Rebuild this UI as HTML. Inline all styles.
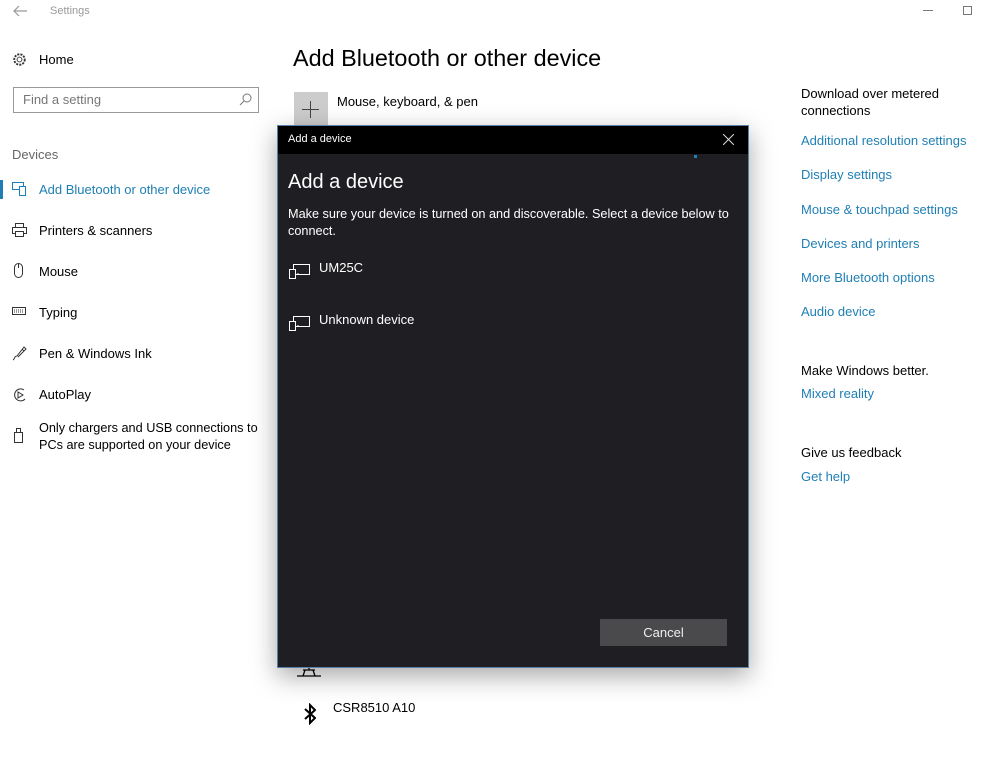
<!DOCTYPE html>
<html><head><meta charset="utf-8"><style>
*{margin:0;padding:0;box-sizing:border-box}
body{width:1000px;height:783px;background:#fff;font-family:"Liberation Sans",sans-serif;position:relative;overflow:hidden;color:#000}
.a{position:absolute;white-space:nowrap}
.lk{color:#1f7fb5;font-size:13px}
.nav{font-size:13px;left:39px}
svg{position:absolute}
</style></head><body>
<svg style="left:12px;top:5px" width="16" height="12" viewBox="0 0 16 12"><path d="M15 6H2M7 1L2 6l5 5" stroke="#999" fill="none" stroke-width="1.2"/></svg>
<div class="a" style="left:50px;top:5px;font-size:11px;color:#999">Settings</div>
<div class="a" style="left:923px;top:10px;width:10px;border-top:1px solid #777"></div>
<div class="a" style="left:963px;top:6px;width:9px;height:9px;border:1px solid #777"></div>

<svg style="left:12px;top:52px" width="15" height="15" viewBox="0 0 16 16"><circle cx="8" cy="8" r="2.6" fill="none" stroke="#333"/><circle cx="8" cy="8" r="5.6" fill="none" stroke="#333" stroke-dasharray="2.2 1.2" stroke-width="2"/></svg>
<div class="a" style="left:39px;top:52px;font-size:13px">Home</div>
<div class="a" style="left:13px;top:87px;width:246px;height:26px;border:1px solid #999"></div>
<div class="a" style="left:23px;top:92px;font-size:13px;color:#777">Find a setting</div>
<svg style="left:239px;top:92px" width="14" height="14" viewBox="0 0 14 14"><circle cx="8" cy="6" r="4" fill="none" stroke="#777"/><path d="M5 9L1 13" stroke="#777"/></svg>
<div class="a" style="left:12px;top:147px;font-size:13px;color:#666">Devices</div>
<div class="a" style="left:0;top:180px;width:3px;height:19px;background:#1f7fb5"></div>
<svg style="left:12px;top:182px" width="16" height="14" viewBox="0 0 16 14"><rect x="0.5" y="0.5" width="11" height="7" fill="none" stroke="#1f7fb5"/><rect x="7.5" y="4.5" width="6" height="9" fill="#fff" stroke="#1f7fb5"/></svg>
<div class="a nav" style="top:182px;color:#1f7fb5">Add Bluetooth or other device</div>
<svg style="left:12px;top:223px" width="16" height="15" viewBox="0 0 16 15"><rect x="3.5" y="0.5" width="8" height="4" fill="none" stroke="#333"/><rect x="0.5" y="4.5" width="14" height="6" fill="none" stroke="#333"/><rect x="3.5" y="8.5" width="8" height="5" fill="#fff" stroke="#333"/></svg>
<div class="a nav" style="top:223px">Printers &amp; scanners</div>
<svg style="left:13px;top:263px" width="12" height="16" viewBox="0 0 12 16"><rect x="1.5" y="0.5" width="8" height="14" rx="4" fill="none" stroke="#333"/><path d="M5.5 1v4" stroke="#333"/></svg>
<div class="a nav" style="top:264px">Mouse</div>
<svg style="left:12px;top:307px" width="15" height="9" viewBox="0 0 15 9"><rect x="0.5" y="0.5" width="13" height="7" fill="none" stroke="#333"/><path d="M2 3h10M2 5h10" stroke="#333" stroke-dasharray="1 1"/></svg>
<div class="a nav" style="top:305px">Typing</div>
<svg style="left:12px;top:345px" width="16" height="16" viewBox="0 0 16 16"><path d="M1 15c2-1 1-4 4-4l7-9 2 2-8 8M10 4l2 2" fill="none" stroke="#333"/></svg>
<div class="a nav" style="top:346px">Pen &amp; Windows Ink</div>
<svg style="left:12px;top:387px" width="16" height="16" viewBox="0 0 16 16"><path d="M12 3A6 6 0 1 0 13 12" fill="none" stroke="#333"/><path d="M6 5v6l5-3z" fill="none" stroke="#333"/></svg>
<div class="a nav" style="top:387px">AutoPlay</div>
<svg style="left:14px;top:428px" width="10" height="15" viewBox="0 0 10 15"><rect x="0.5" y="4.5" width="8" height="10" fill="none" stroke="#333"/><rect x="2.5" y="0.5" width="4" height="4" fill="none" stroke="#333"/></svg>
<div class="a nav" style="top:420px;line-height:17px;font-size:12.7px">Only chargers and USB connections to<br>PCs are supported on your device</div>

<div class="a" style="left:293px;top:45px;font-size:23.4px;color:#000">Add Bluetooth or other device</div>
<div class="a" style="left:294px;top:92px;width:34px;height:34px;background:#ccc"></div>
<svg style="left:302px;top:101px" width="17" height="17"><path d="M8.5 0v17M0 8.5h17" stroke="#444"/></svg>
<div class="a" style="left:337px;top:94px;font-size:13px">Mouse, keyboard, &amp; pen</div>
<svg style="left:297px;top:664px" width="24" height="16" viewBox="0 0 24 16"><path d="M0 12h24M12 0v6M6 6h12M8 6l-2 6M16 6l2 6" stroke="#000" fill="none" stroke-width="1.3"/></svg>
<svg style="left:304px;top:703px" width="12" height="22" viewBox="0 0 12 22"><path d="M1 6l10 9-5 5V2l5 5L1 16" stroke="#000" fill="none" stroke-width="2"/></svg>
<div class="a" style="left:333px;top:700px;font-size:13px">CSR8510 A10</div>

<div class="a" style="left:801px;top:85px;font-size:13px;line-height:17px">Download over metered<br>connections</div>
<div class="a lk" style="left:801px;top:133px">Additional resolution settings</div>
<div class="a lk" style="left:801px;top:167px">Display settings</div>
<div class="a lk" style="left:801px;top:202px">Mouse &amp; touchpad settings</div>
<div class="a lk" style="left:801px;top:236px">Devices and printers</div>
<div class="a lk" style="left:801px;top:270px">More Bluetooth options</div>
<div class="a lk" style="left:801px;top:304px">Audio device</div>
<div class="a" style="left:801px;top:363px;font-size:13px">Make Windows better.</div>
<div class="a lk" style="left:801px;top:386px">Mixed reality</div>
<div class="a" style="left:801px;top:445px;font-size:13px">Give us feedback</div>
<div class="a lk" style="left:801px;top:469px">Get help</div>

<div class="a" style="left:277px;top:125px;width:472px;height:543px;background:#1f1e22;border:1px solid #5a7fa8;box-shadow:0 8px 24px rgba(0,0,0,.35)">
 <div style="position:absolute;left:0;top:0;width:100%;height:28px;background:#000"></div>
 <div class="a" style="left:10px;top:7px;font-size:11px;color:#fff">Add a device</div>
 <svg style="left:445px;top:8px" width="11" height="11"><path d="M0 0l11 11M11 0L0 11" stroke="#ddd"/></svg>
 <div class="a" style="left:416px;top:29px;width:3px;height:3px;background:#1f7fb5"></div>
 <div class="a" style="left:10px;top:45px;font-size:20px;color:#fff">Add a device</div>
 <div class="a" style="left:10px;top:80px;font-size:12.7px;color:#fff;line-height:17px">Make sure your device is turned on and discoverable. Select a device below to<br>connect.</div>
 <svg style="left:11px;top:138px" width="22" height="15" viewBox="0 0 22 15"><rect x="4.5" y="0.5" width="16" height="10" fill="none" stroke="#fff"/><rect x="0.5" y="5.5" width="6" height="9" fill="#1f1e22" stroke="#fff"/><path d="M8 10h2" stroke="#fff"/></svg>
 <div class="a" style="left:41px;top:134px;font-size:13px;color:#fff">UM25C</div>
 <svg style="left:11px;top:190px" width="22" height="15" viewBox="0 0 22 15"><rect x="4.5" y="0.5" width="16" height="10" fill="none" stroke="#fff"/><rect x="0.5" y="5.5" width="6" height="9" fill="#1f1e22" stroke="#fff"/><path d="M8 10h2" stroke="#fff"/></svg>
 <div class="a" style="left:41px;top:186px;font-size:13px;color:#fff">Unknown device</div>
 <div class="a" style="left:322px;top:493px;width:127px;height:27px;background:#4a4a4c;color:#eee;font-size:13px;text-align:center;line-height:27px">Cancel</div>
</div>
</body></html>
